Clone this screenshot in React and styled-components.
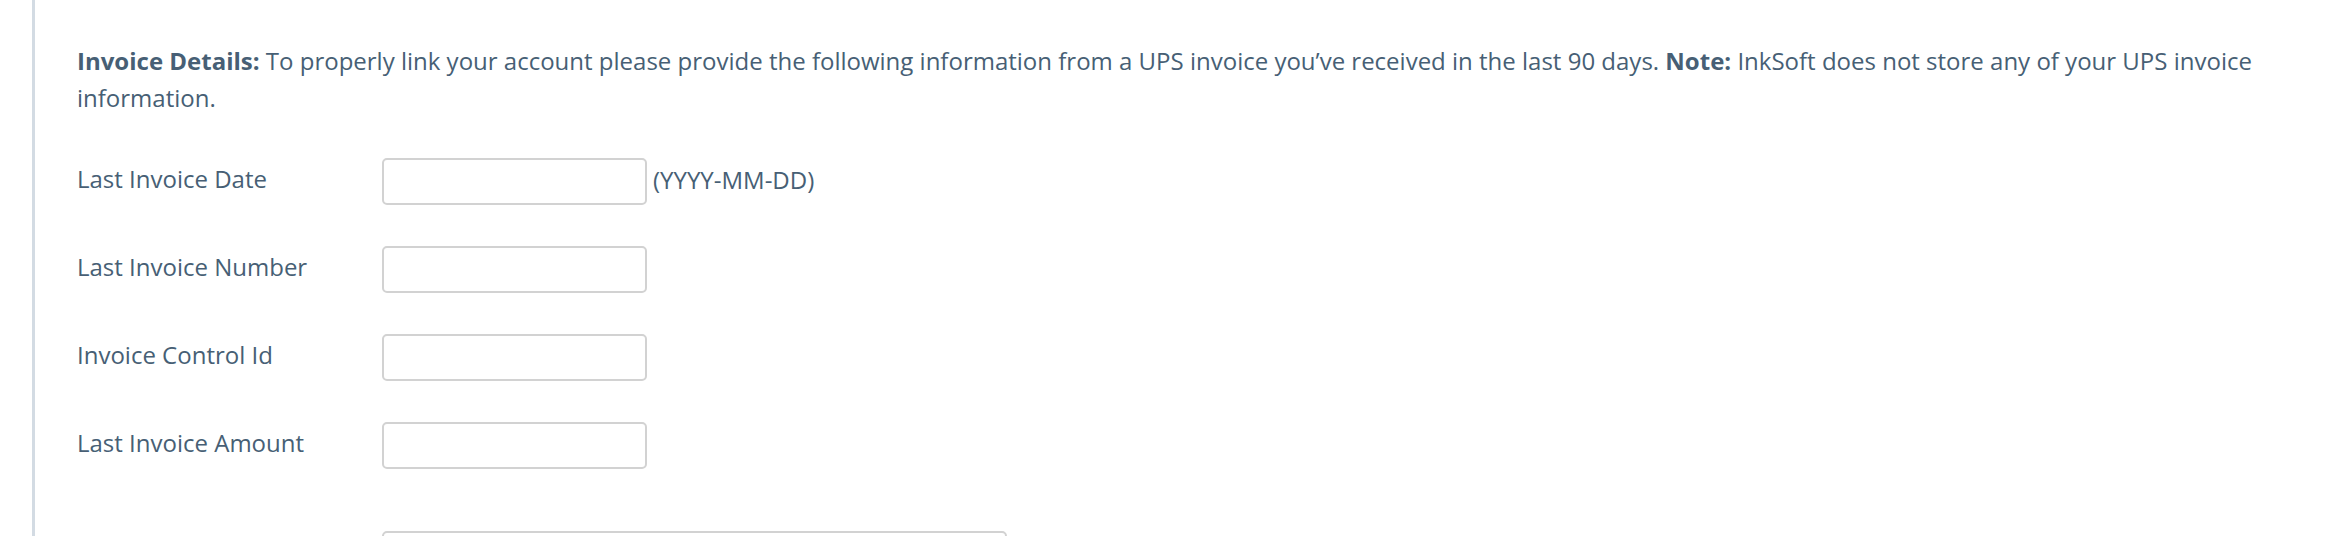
import React from "react";
import styled, { createGlobalStyle } from "styled-components";

const Global = createGlobalStyle`
  html, body { margin: 0; padding: 0; background: #ffffff; }
  body { font-family: "Open Sans", "Liberation Sans", sans-serif; color: #475f75; }
`;

const Page = styled.div`
  padding-left: 32px;
  height: 536px;
  overflow: hidden;
`;

const Panel = styled.section`
  border-left: 3px solid #d3dbe3;
  padding: 42px 40px 0 42px;
  min-height: 536px;
  box-sizing: border-box;
`;

const Intro = styled.p`
  margin: 0 0 42px;
  font-size: 24px;
  line-height: 37px;
  color: #475f75;
  strong { font-weight: 700; }
`;

const Fields = styled.div`
  display: flex;
  flex-direction: column;
  gap: 41px;
`;

const Row = styled.div`
  display: flex;
  align-items: flex-start;
  margin-top: ${(p) => (p.$extraTop ? "21px" : "0")};
`;

const Label = styled.label`
  flex: 0 0 305px;
  margin-top: 2px;
  font-size: 24px;
  line-height: 37px;
  color: #475f75;
`;

const Input = styled.input`
  box-sizing: border-box;
  width: ${(p) => (p.$wide ? "625px" : "265px")};
  height: 47px;
  margin: 0;
  padding: 0 10px;
  border: 2px solid #d2d2d2;
  border-radius: 5px;
  background: #fff;
  font-family: inherit;
  font-size: 22px;
  color: #475f75;
  outline: none;
`;

const Hint = styled.span`
  margin: 3px 0 0 6px;
  font-size: 24px;
  line-height: 37px;
  color: #475f75;
`;

const fields = [
  { id: "date", label: "Last Invoice Date", hint: "(YYYY-MM-DD)" },
  { id: "number", label: "Last Invoice Number" },
  { id: "control", label: "Invoice Control Id" },
  { id: "amount", label: "Last Invoice Amount" },
];

export default function App() {
  return (
    <>
      <Global />
      <Page>
        <Panel>
          <Intro>
            <strong>Invoice Details:</strong> To properly link your account please provide the
            following information from a UPS invoice you’ve received in the last 90 days.{" "}
            <strong>Note:</strong> InkSoft does not store any of your UPS invoice information.
          </Intro>
          <Fields>
            {fields.map((f) => (
              <Row key={f.id}>
                <Label htmlFor={f.id}>{f.label}</Label>
                <Input id={f.id} type="text" />
                {f.hint && <Hint>{f.hint}</Hint>}
              </Row>
            ))}
            <Row $extraTop>
              <Label htmlFor="extra" />
              <Input id="extra" type="text" $wide />
            </Row>
          </Fields>
        </Panel>
      </Page>
    </>
  );
}
